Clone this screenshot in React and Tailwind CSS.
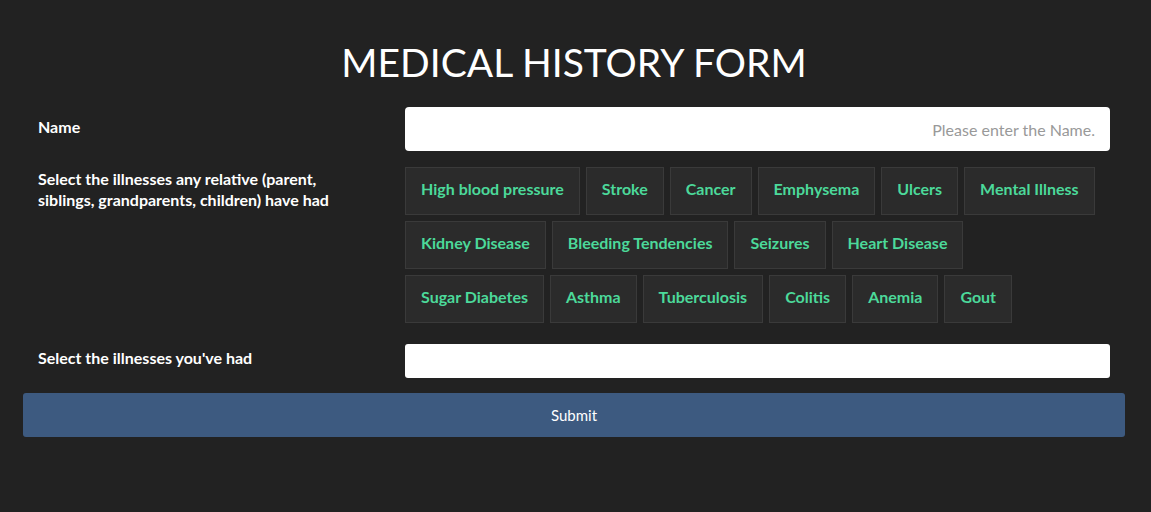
import React from "react";

const rows = [
  ["High blood pressure", "Stroke", "Cancer", "Emphysema", "Ulcers", "Mental Illness"],
  ["Kidney Disease", "Bleeding Tendencies", "Seizures", "Heart Disease"],
  ["Sugar Diabetes", "Asthma", "Tuberculosis", "Colitis", "Anemia", "Gout"],
];

export default function App() {
  return (
    <div
      className="min-h-[512px] w-full bg-[#222222] text-white"
      style={{ fontFamily: "Lato, 'Open Sans', sans-serif" }}
    >
      <div className="ml-[23px] w-[1102px] pt-[36px]">
        <h1 className="text-center text-[39px] leading-[52px] font-normal">
          MEDICAL HISTORY FORM
        </h1>
        <div className="mt-[19px] grid grid-cols-[367px_1fr]">
          <div className="px-[15px] pt-[9px] text-[16px] font-bold leading-[21px]">Name</div>
          <div className="px-[15px]">
            <input
              className="h-[44px] w-full rounded-[4px] bg-white px-[15px] text-right text-[16px] text-[#333] outline-none placeholder:text-[#999]"
              placeholder="Please enter the Name."
            />
          </div>

          <div className="mt-[16px] px-[15px] pt-[1px] text-[16px] font-bold leading-[21px]">
            Select the illnesses any relative (parent, siblings, grandparents, children) have had
          </div>
          <div className="mt-[16px] flex flex-col gap-[6px] px-[15px]">
            {rows.map((row, i) => (
              <div key={i} className="flex gap-[6px]">
                {row.map((t) => (
                  <button
                    key={t}
                    className="h-[48px] border border-[#3a3a3a] bg-[#2b2b2b] px-[15px] pb-[4px] text-[16px] font-bold text-[#4cd99a]"
                  >
                    {t}
                  </button>
                ))}
              </div>
            ))}
          </div>

          <div className="mt-[21px] px-[15px] pt-[3px] text-[16px] font-bold leading-[21px]">
            Select the illnesses you've had
          </div>
          <div className="mt-[21px] px-[15px]">
            <input className="h-[34px] w-full rounded-[3px] bg-white px-[12px] text-[14px] text-[#333] outline-none" />
          </div>
        </div>
        <button className="mt-[15px] h-[44px] w-full rounded-[3px] bg-[#3d5a80] text-[15px] text-white">
          Submit
        </button>
      </div>
    </div>
  );
}
